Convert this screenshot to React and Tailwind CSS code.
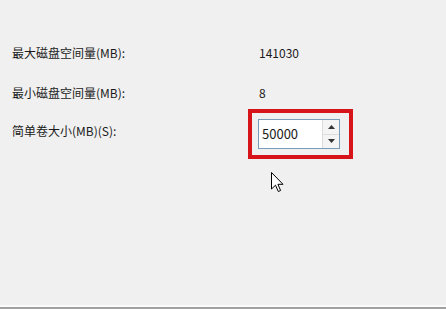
export default function App() {
  const font = { fontFamily: '"Microsoft YaHei", "Noto Sans CJK SC", "Noto Sans", sans-serif' };
  return (
    <div className="relative w-[446px] h-[309px] bg-[#f0f0f0] flex flex-col text-[12px] text-[#1a1a1a]" style={font}>
      <div className="flex-1 flex flex-col pt-[43px] pl-[12px]">
        <div className="flex items-center h-[20px]">
          <div className="w-[247px]">最大磁盘空间量(MB):</div>
          <div>141030</div>
        </div>
        <div className="flex items-center h-[20px] mt-[20px]">
          <div className="w-[247px]">最小磁盘空间量(MB):</div>
          <div>8</div>
        </div>
        <div className="flex items-center mt-[6px]">
          <div className="w-[236px] mt-[-6px]">简单卷大小(MB)(S):</div>
          <div className="border-[4px] border-[#d7141a] px-[6px] pt-[6px] pb-[6px] w-[105px] h-[50px]">
            <div className="flex w-[82px] h-[30px] border border-[#7a9cb8] bg-white">
              <div className="flex-1 flex items-center pl-[3px] text-[13px]">50000</div>
              <div className="w-[17px] flex flex-col border-l border-[#dcdcdc]">
                <div className="flex-1 flex items-center justify-center border-b border-[#dcdcdc] bg-[#f4f4f4]">
                  <svg width="7" height="4" viewBox="0 0 7 4"><path d="M3.5 0 L7 4 L0 4 Z" fill="#333" /></svg>
                </div>
                <div className="flex-1 flex items-center justify-center bg-[#f4f4f4]">
                  <svg width="7" height="4" viewBox="0 0 7 4"><path d="M0 0 L7 0 L3.5 4 Z" fill="#333" /></svg>
                </div>
              </div>
            </div>
          </div>
        </div>
      </div>
      <div className="h-[2px] bg-[#fbfbfb]" />
      <div className="h-[2px] bg-[#a0a0a0]" />
      <svg className="absolute left-[271px] top-[172px]" width="13" height="21" viewBox="0 0 13 21">
        <path d="M0.5 0.5 L0.5 17 L4.5 13.2 L7.3 19.5 L9.6 18.5 L6.9 12.3 L12 12.3 Z" fill="#fff" stroke="#000" strokeWidth="1" strokeLinejoin="miter" />
      </svg>
    </div>
  );
}
